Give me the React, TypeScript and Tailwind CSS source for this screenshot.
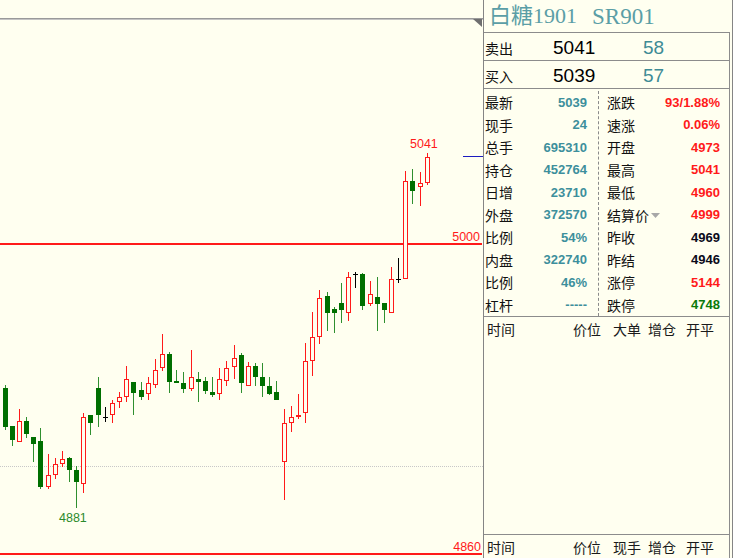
type Candle = [number, 'r' | 'g' | 'd', number, number, number, number];

// [index, kind, bodyTop, bodyBottom, wickTop, wickBottom]
const candles: Candle[] = [
  [0, 'r', 402, 408, 400, 412],
  [1, 'g', 388, 427, 385, 430],
  [2, 'g', 426, 440, 426, 446],
  [3, 'r', 421, 442, 409, 442],
  [4, 'g', 421, 434, 417, 438],
  [5, 'g', 437, 444, 437, 462],
  [6, 'g', 441, 487, 428, 489],
  [7, 'r', 475, 487, 454, 489],
  [8, 'r', 464, 475, 458, 479],
  [9, 'r', 459, 464, 451, 467],
  [10, 'g', 458, 470, 457, 482],
  [11, 'g', 470, 482, 466, 508],
  [12, 'r', 417, 484, 413, 493],
  [13, 'g', 415, 423, 415, 435],
  [14, 'g', 388, 415, 377, 427],
  [15, 'd', 417, 417, 407, 422],
  [16, 'r', 403, 415, 400, 423],
  [17, 'r', 397, 402, 392, 408],
  [18, 'r', 379, 397, 366, 402],
  [19, 'g', 382, 393, 382, 415],
  [20, 'g', 390, 397, 382, 400],
  [21, 'r', 383, 394, 377, 400],
  [22, 'r', 370, 385, 359, 388],
  [23, 'r', 354, 368, 334, 371],
  [24, 'g', 354, 382, 352, 393],
  [25, 'g', 381, 383, 370, 383],
  [26, 'g', 383, 389, 372, 393],
  [27, 'r', 377, 389, 350, 391],
  [28, 'g', 379, 382, 372, 402],
  [29, 'g', 381, 391, 377, 394],
  [30, 'g', 392, 395, 377, 397],
  [31, 'r', 379, 394, 368, 400],
  [32, 'r', 368, 381, 361, 386],
  [33, 'r', 358, 367, 345, 379],
  [34, 'g', 355, 383, 353, 393],
  [35, 'r', 366, 386, 362, 386],
  [36, 'g', 366, 377, 363, 386],
  [37, 'g', 377, 386, 363, 397],
  [38, 'g', 386, 394, 377, 395],
  [39, 'g', 392, 400, 381, 400],
  [40, 'r', 423, 462, 409, 500],
  [41, 'r', 417, 423, 406, 432],
  [42, 'r', 415, 417, 394, 419],
  [43, 'r', 361, 413, 343, 423],
  [44, 'r', 337, 361, 312, 376],
  [45, 'r', 298, 337, 290, 344],
  [46, 'g', 296, 313, 292, 331],
  [47, 'g', 309, 313, 307, 333],
  [48, 'g', 303, 310, 283, 323],
  [49, 'r', 277, 313, 272, 321],
  [50, 'd', 274, 274, 272, 288],
  [51, 'g', 274, 306, 273, 310],
  [52, 'r', 294, 304, 281, 306],
  [53, 'g', 297, 304, 277, 331],
  [54, 'g', 303, 310, 303, 323],
  [55, 'r', 279, 313, 267, 313],
  [56, 'd', 279, 279, 258, 283],
  [57, 'r', 181, 279, 171, 279],
  [58, 'g', 181, 191, 169, 204],
  [59, 'r', 183, 187, 172, 206],
  [60, 'r', 157, 183, 153, 185],
];

const RED = '#ff1a1a';
const GREEN = '#006f00';

function CandleMark({ c }: { c: Candle }) {
  const [i, kind, top, bottom, hi, lo] = c;
  const x = Math.round(4.6 + 7.155 * (i - 1));
  const wx = x + 0.5;
  if (kind === 'd') {
    return (
      <g stroke="#000">
        <line x1={wx} x2={wx} y1={hi} y2={lo} />
        <line x1={x - 2} x2={x + 3} y1={top + 0.5} y2={top + 0.5} />
      </g>
    );
  }
  if (kind === 'g') {
    return (
      <g>
        <line x1={wx} x2={wx} y1={hi} y2={lo} stroke="#2f8f2f" />
        <rect x={x - 2} y={top} width={5} height={Math.max(bottom - top, 2)} fill={GREEN} />
      </g>
    );
  }
  return (
    <g stroke={RED}>
      {hi < top && <line x1={wx} x2={wx} y1={hi} y2={top} />}
      {lo > bottom && <line x1={wx} x2={wx} y1={bottom} y2={lo} />}
      <rect x={x - 1.5} y={top + 0.5} width={4} height={Math.max(bottom - top - 1, 1)} fill="#fffff0" />
    </g>
  );
}

function Chart() {
  return (
    <div className="w-[483px] h-full shrink-0">
      <svg width="483" height="558" shapeRendering="crispEdges" style={{ fontFamily: '"Liberation Sans", Arial, sans-serif' }}>
        <rect x="0" y="18" width="483" height="1" fill="#9a9a9a" />
        <rect x="0" y="19" width="483" height="1" fill="#c4c4c4" />
        <polygon points="473,19 482,19 482,27" fill="#6f6f6f" shapeRendering="auto" />
        <line x1="0" x2="483" y1="466.5" y2="466.5" stroke="#c8c8c8" strokeDasharray="1 1" />
        <rect x="0" y="243" width="482" height="2" fill={RED} />
        <rect x="0" y="553" width="482" height="2" fill={RED} />
        <line x1="463" x2="483" y1="156.5" y2="156.5" stroke="#1c1cc0" />
        {candles.map((c) => (
          <CandleMark key={c[0]} c={c} />
        ))}
        <g shapeRendering="auto" fontSize="12.5">
          <text x="480" y="241" fill={RED} textAnchor="end">5000</text>
          <text x="481" y="551" fill={RED} textAnchor="end">4860</text>
          <text x="410" y="148" fill={RED}>5041</text>
          <text x="59" y="522" fill="#2b8a2b">4881</text>
        </g>
      </svg>
    </div>
  );
}

const leftRows: [string, string][] = [
  ['最新', '5039'],
  ['现手', '24'],
  ['总手', '695310'],
  ['持仓', '452764'],
  ['日增', '23710'],
  ['外盘', '372570'],
  ['比例', '54%'],
  ['内盘', '322740'],
  ['比例', '46%'],
  ['杠杆', '-----'],
];

const rightRows: [string, string, string][] = [
  ['涨跌', '93/1.88%', 'text-[#ff1a1a]'],
  ['速涨', '0.06%', 'text-[#ff1a1a]'],
  ['开盘', '4973', 'text-[#ff1a1a]'],
  ['最高', '5041', 'text-[#ff1a1a]'],
  ['最低', '4960', 'text-[#ff1a1a]'],
  ['结算价', '4999', 'text-[#ff1a1a]'],
  ['昨收', '4969', 'text-[#0a0a1a]'],
  ['昨结', '4946', 'text-[#0a0a1a]'],
  ['涨停', '5144', 'text-[#ff1a1a]'],
  ['跌停', '4748', 'text-[#0a7a0a]'],
];

const num = 'font-["Liberation_Sans",Arial,sans-serif] font-bold text-[13px]';

function QuotePanel() {
  return (
    <div className="w-[250px] h-full flex flex-col border-l border-r border-[#858585]">
      <div className="h-[32px] flex items-center pl-[5px] text-[22px] text-[#5b9ea6] font-['Liberation_Serif','Noto_Sans_CJK_SC',serif] leading-none">
        <span>白糖1901</span>
        <span className="ml-[15px] text-[23px]">SR901</span>
      </div>
      <div className="flex-1 flex flex-col border-t border-r border-[#8c8c8c] mr-[2px]">
        {[
          ['卖出', '5041', '58'],
          ['买入', '5039', '57'],
        ].map(([label, price, qty]) => (
          <div key={label} className="h-[28px] flex items-center pt-[2px] border-b border-[#8c8c8c]">
            <span className="w-[69px] pl-[1px] text-[14px] text-[#111]">{label}</span>
            <span className="w-[90px] text-[19px] text-black font-['Liberation_Sans',Arial,sans-serif]">{price}</span>
            <span className="text-[19px] text-[#3e8b95] font-['Liberation_Sans',Arial,sans-serif]">{qty}</span>
          </div>
        ))}
        <div className="flex pt-[2px] border-b border-[#8c8c8c]">
          <div className="w-[115px] border-r border-dashed border-[#8a8a8a]">
            {leftRows.map(([label, value], i) => (
              <div key={i} className="h-[22.5px] flex items-center justify-between pl-[1px] pr-[11px]">
                <span className="text-[14px] text-[#111]">{label}</span>
                <span className={`${num} text-[#3d8f9c]`}>{value}</span>
              </div>
            ))}
          </div>
          <div className="flex-1">
            {rightRows.map(([label, value, color]) => (
              <div key={label} className="h-[22.5px] flex items-center justify-between pl-[8px] pr-[9px]">
                <span className="text-[14px] text-[#111] flex items-center">
                  {label}
                  {label === '结算价' && (
                    <svg width="9" height="5" className="ml-[2px] mt-[2px]">
                      <polygon points="0,0 9,0 4.5,5" fill="#a8a8a8" />
                    </svg>
                  )}
                </span>
                <span className={`${num} ${color}`}>{value}</span>
              </div>
            ))}
          </div>
        </div>
        <Header cols={['时间', '价位', '大单', '增仓', '开平']} />
        <div className="flex-1" />
        <div className="border-t border-[#8c8c8c]">
          <Header cols={['时间', '价位', '现手', '增仓', '开平']} />
        </div>
      </div>
    </div>
  );
}

function Header({ cols }: { cols: string[] }) {
  const widths = ['w-[86px]', 'w-[40px]', 'w-[35px]', 'w-[38px]', 'w-[30px]'];
  return (
    <div className="h-[23px] flex items-center pl-[3px] text-[14px] text-[#1a1a1a]">
      {cols.map((c, i) => (
        <span key={i} className={widths[i]}>
          {c}
        </span>
      ))}
    </div>
  );
}

export default function App() {
  return (
    <div className="w-[733px] h-[558px] overflow-hidden flex bg-[#fffff0] font-['Noto_Sans_CJK_SC',sans-serif] leading-none">
      <Chart />
      <QuotePanel />
    </div>
  );
}
